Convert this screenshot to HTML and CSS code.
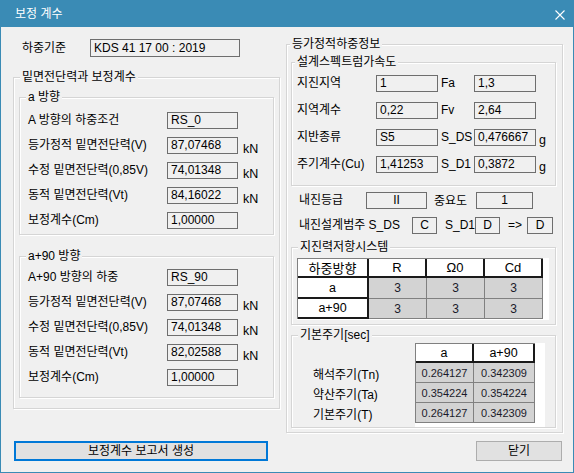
FILE: index.html
```html
<!DOCTYPE html>
<html lang="ko">
<head>
<meta charset="utf-8">
<title>보정 계수</title>
<link rel="stylesheet" href="styles.css">
</head>
<body>
<div class="window">
  <div class="titlebar">
    <span class="title">보정 계수</span>
    <svg class="close" width="10" height="10" viewBox="0 0 10 10"><path d="M0.5 0.5 L9.5 9.5 M9.5 0.5 L0.5 9.5" stroke="#ffffff" stroke-width="1.1" fill="none"/></svg>
  </div>
  <div class="client">
    <div class="col-left">
      <div class="std-row"><span class="std-label">하중기준</span><span class="box std-box">KDS 41 17 00 : 2019</span></div>
      <div class="group g-main">
        <span class="legend lg-6">밑면전단력과 보정계수</span>
        <div class="group g-dir g-a">
          <span class="legend lg-6">a 방향</span>
          <div class="rows">
            <div class="row"><span class="lbl">A 방향의 하중조건</span><span class="box val">RS_0</span></div>
            <div class="row"><span class="lbl">등가정적 밑면전단력(V)</span><span class="box val">87,07468</span><span class="unit">kN</span></div>
            <div class="row"><span class="lbl">수정 밑면전단력(0,85V)</span><span class="box val">74,01348</span><span class="unit">kN</span></div>
            <div class="row"><span class="lbl">동적 밑면전단력(Vt)</span><span class="box val">84,16022</span><span class="unit">kN</span></div>
            <div class="row"><span class="lbl">보정계수(Cm)</span><span class="box val">1,00000</span></div>
          </div>
        </div>
        <div class="group g-dir g-b">
          <span class="legend lg-6">a+90 방향</span>
          <div class="rows">
            <div class="row"><span class="lbl">A+90 방향의 하중</span><span class="box val">RS_90</span></div>
            <div class="row"><span class="lbl">등가정적 밑면전단력(V)</span><span class="box val">87,07468</span><span class="unit">kN</span></div>
            <div class="row"><span class="lbl">수정 밑면전단력(0,85V)</span><span class="box val">74,01348</span><span class="unit">kN</span></div>
            <div class="row"><span class="lbl">동적 밑면전단력(Vt)</span><span class="box val">82,02588</span><span class="unit">kN</span></div>
            <div class="row"><span class="lbl">보정계수(Cm)</span><span class="box val">1,00000</span></div>
          </div>
        </div>
      </div>
    </div>
    <div class="col-right">
      <div class="group g-info">
        <span class="legend lg-3">등가정적하중정보</span>
        <div class="group g-spec">
          <span class="legend lg-3">설계스펙트럼가속도</span>
          <div class="srows">
            <div class="srow"><span class="slbl">지진지역</span><span class="box sval">1</span><span class="sunit">Fa</span><span class="box sval">1,3</span></div>
            <div class="srow"><span class="slbl">지역계수</span><span class="box sval">0,22</span><span class="sunit">Fv</span><span class="box sval">2,64</span></div>
            <div class="srow"><span class="slbl">지반종류</span><span class="box sval">S5</span><span class="sunit">S_DS</span><span class="box sval">0,476667</span><span class="gunit">g</span></div>
            <div class="srow"><span class="slbl">주기계수(Cu)</span><span class="box sval">1,41253</span><span class="sunit">S_D1</span><span class="box sval">0,3872</span><span class="gunit">g</span></div>
          </div>
        </div>
        <div class="grade-row">
          <span class="glbl">내진등급</span><span class="box cbox w61">II</span>
          <span class="imp">중요도</span><span class="box cbox w57">1</span>
        </div>
        <div class="cat-row">
          <span class="clbl">내진설계범주 S_DS</span><span class="box cbox w25">C</span>
          <span class="sd1">S_D1</span><span class="box cbox w25">D</span>
          <span class="arrow">=&gt;</span><span class="box cbox w26">D</span>
        </div>
        <div class="group g-sys">
          <span class="legend lg-6">지진력저항시스템</span>
          <div class="tbl-wrap sys-wrap">
            <div class="grid sys-grid">
              <div class="hc hdr">하중방향</div><div class="hc hdr">R</div><div class="hc hdr">Ω0</div><div class="hc hdr">Cd</div>
              <div class="hc">a</div><div class="dc">3</div><div class="dc">3</div><div class="dc">3</div>
              <div class="hc">a+90</div><div class="dc">3</div><div class="dc">3</div><div class="dc">3</div>
            </div>
          </div>
        </div>
        <div class="group g-period">
          <span class="legend lg-6">기본주기[sec]</span>
          <div class="period-body">
            <div class="plabels">
              <div class="plbl">해석주기(Tn)</div>
              <div class="plbl">약산주기(Ta)</div>
              <div class="plbl">기본주기(T)</div>
            </div>
            <div class="tbl-wrap per-wrap">
              <div class="grid per-grid">
                <div class="hc">a</div><div class="hc">a+90</div>
                <div class="dc num">0.264127</div><div class="dc num">0.342309</div>
                <div class="dc num">0.354224</div><div class="dc num">0.354224</div>
                <div class="dc num">0.264127</div><div class="dc num">0.342309</div>
              </div>
            </div>
          </div>
        </div>
      </div>
    </div>
  </div>
  <div class="footer">
    <button class="btn btn-default btn-report">보정계수 보고서 생성</button>
    <button class="btn btn-close">닫기</button>
  </div>
</div>
</body>
</html>
```

FILE: styles.css
```css
* { box-sizing: border-box; }

html, body {
  margin: 0;
  padding: 0;
  background: #f0f0f0;
}

body {
  font-family: "Liberation Sans", "Noto Sans CJK KR", sans-serif;
  font-size: 12px;
  color: #000;
}

.window {
  width: 574px;
  height: 473px;
  border: 1px solid #3a8bb5;
  border-top: 0;
  background: #f0f0f0;
  display: flex;
  flex-direction: column;
}

.titlebar {
  height: 27px;
  flex: none;
  background: #3a8bb5;
  display: flex;
  align-items: center;
  justify-content: space-between;
  padding: 0 8px 0 14px;
  color: #fff;
}

.title {
  font-size: 12px;
  line-height: 14px;
  padding-top: 1px;
}

.close { display: block; margin-top: 2px; }

.client {
  height: 406px;
  flex: none;
  display: flex;
  gap: 6px;
  padding: 12px 10px 0 12px;
}

.col-left { width: 267px; flex: none; }
.col-right { width: 277px; flex: none; }

.box {
  display: block;
  flex: none;
  height: 17px;
  border: 1px solid #6e6e6e;
  background: #f0f0f0;
  padding-left: 3px;
  line-height: 15px;
  white-space: nowrap;
  overflow: hidden;
}

.std-row {
  display: flex;
  align-items: center;
  height: 18px;
  padding-left: 9px;
}
.std-label { width: 68px; line-height: 16px; }
.std-box { width: 150px; height: 18px; line-height: 16px; }

.group {
  position: relative;
  border: 1px solid #d5d5d5;
  box-shadow: inset 1px 1px 0 #ffffff, 1px 1px 0 #ffffff;
}

.legend {
  position: absolute;
  top: -8px;
  background: #f0f0f0;
  padding: 0 2px;
  line-height: 14px;
  white-space: nowrap;
}
.lg-6 { left: 6px; }
.lg-3 { left: 3px; }

.g-main {
  margin-top: 20px;
  height: 332px;
  padding: 19px 5px 0;
}

.g-dir { padding-left: 8px; }
.g-a { height: 138px; padding-top: 14px; }
.g-b { height: 142px; padding-top: 12px; margin-top: 21px; }

.rows { display: flex; flex-direction: column; gap: 8px; }
.row { display: flex; align-items: flex-start; height: 17px; }
.lbl { width: 139px; line-height: 17px; white-space: nowrap; }
.val { width: 71px; }
.unit { margin-left: 5px; padding-top: 5px; line-height: 14px; font-size: 12.5px; }

/* right column */
.g-info {
  margin-top: 5px;
  height: 389px;
  padding: 17px 6px 0 4px;
}

.g-spec {
  height: 124px;
  padding: 12px 0 0 5px;
}

.srows { display: flex; flex-direction: column; gap: 10px; }
.srow { display: flex; align-items: flex-start; height: 17px; }
.slbl { width: 79px; line-height: 17px; white-space: nowrap; }
.sval { width: 62px; }
.sunit { width: 36px; padding-left: 3px; line-height: 17px; white-space: nowrap; }
.gunit { margin-left: 3px; padding-top: 4px; line-height: 14px; font-size: 12.5px; }

.cbox { text-align: center; padding-left: 0; }
.w61 { width: 61px; }
.w57 { width: 57px; }
.w25 { width: 25px; }
.w26 { width: 26px; }

.grade-row {
  display: flex;
  align-items: center;
  height: 17px;
  margin: 6px 0 0 8px;
}
.glbl { width: 67px; line-height: 17px; }
.imp { margin-left: 7px; width: 42px; line-height: 17px; padding-top: 2px; }

.cat-row {
  display: flex;
  align-items: center;
  height: 17px;
  margin: 8px 0 0 8px;
}
.clbl { width: 113px; line-height: 17px; white-space: nowrap; }
.sd1 { margin-left: 8px; width: 30px; line-height: 17px; }
.arrow { margin-left: 8px; width: 19px; line-height: 17px; }

.g-sys {
  margin-top: 13px;
  height: 78px;
  padding: 10px 0 0 5px;
}

.tbl-wrap { background: #ffffff; }
.sys-wrap { width: 252px; height: 62px; }
.per-wrap { width: 130px; height: 84px; }

.grid {
  display: grid;
  border-top: 1px solid #808080;
  border-left: 1px solid #808080;
  width: max-content;
}
.sys-grid {
  grid-template-columns: 71px 58px 58px 58px;
  grid-template-rows: 19px 21px 20px;
}
.per-grid {
  grid-template-columns: 58px 61px;
  grid-template-rows: 19px 20px 20px 20px;
}

.hc, .dc {
  display: flex;
  align-items: center;
  justify-content: center;
  white-space: nowrap;
}
.hc {
  background: #ffffff;
  border-right: 2px solid #1a1a1a;
  border-bottom: 2px solid #1a1a1a;
  font-size: 12.5px;
}
.hdr { font-size: 13px; }
.dc {
  background: #d3d3d3;
  border-right: 1px solid #808080;
  border-bottom: 1px solid #808080;
  color: #1a1a2a;
  font-size: 12px;
}
.dc.num { font-size: 11px; }

.g-period {
  margin-top: 10px;
  height: 93px;
  padding: 7px 0 0 21px;
}
.period-body { display: flex; }
.plabels { width: 102px; padding-top: 20px; }
.plbl { height: 20px; line-height: 20px; padding-top: 2px; white-space: nowrap; }

.footer {
  display: flex;
  justify-content: space-between;
  align-items: flex-start;
  padding: 0 11px 0 13px;
  margin-top: 8px;
}

.btn {
  height: 20px;
  margin: 0;
  padding: 0;
  background: #e1e1e1;
  border: 1px solid #adadad;
  font-family: "Liberation Sans", "Noto Sans CJK KR", sans-serif;
  font-size: 12px;
  color: #000;
  line-height: 16px;
}
.btn-default { border: 2px solid #0078d7; }
.btn-report { width: 254px; }
.btn-close { width: 86px; }
```
